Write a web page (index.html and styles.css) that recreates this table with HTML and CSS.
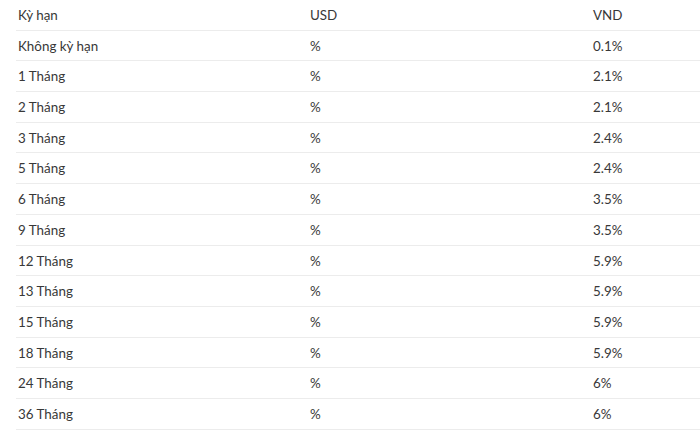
FILE: index.html
```
<!DOCTYPE html>
<html lang="vi">
<head>
    <meta charset="UTF-8">
    <meta name="viewport" content="width=device-width, initial-scale=1.0">
    <title>Lãi suất tiết kiệm</title>
    <link rel="stylesheet" href="styles.css">
</head>
<body>
    <table class="rate-table">
        <thead>
            <tr>
                <th class="col-term">Kỳ hạn</th>
                <th class="col-usd">USD</th>
                <th class="col-vnd">VND</th>
            </tr>
        </thead>
        <tbody>
            <tr><td>Không kỳ hạn</td><td>%</td><td>0.1%</td></tr>
            <tr><td>1 Tháng</td><td>%</td><td>2.1%</td></tr>
            <tr><td>2 Tháng</td><td>%</td><td>2.1%</td></tr>
            <tr><td>3 Tháng</td><td>%</td><td>2.4%</td></tr>
            <tr><td>5 Tháng</td><td>%</td><td>2.4%</td></tr>
            <tr><td>6 Tháng</td><td>%</td><td>3.5%</td></tr>
            <tr><td>9 Tháng</td><td>%</td><td>3.5%</td></tr>
            <tr><td>12 Tháng</td><td>%</td><td>5.9%</td></tr>
            <tr><td>13 Tháng</td><td>%</td><td>5.9%</td></tr>
            <tr><td>15 Tháng</td><td>%</td><td>5.9%</td></tr>
            <tr><td>18 Tháng</td><td>%</td><td>5.9%</td></tr>
            <tr><td>24 Tháng</td><td>%</td><td>6%</td></tr>
            <tr><td>36 Tháng</td><td>%</td><td>6%</td></tr>
        </tbody>
    </table>
</body>
</html>
```

FILE: styles.css
```
body {
    margin: 0;
    padding: 0 0 0 16px;
    background: #fff;
    font-family: Lato, "Noto Sans", sans-serif;
    color: #383838;
    overflow: hidden;
}
.rate-table {
    border-collapse: collapse;
    table-layout: fixed;
    width: 700px;
}
.col-term {
    width: 288px;
}
.col-usd {
    width: 279px;
}
.col-vnd {
    width: 133px;
}
.rate-table th,
.rate-table td {
    padding: 1px 2px 0;
    line-height: 28.69px;
    border-bottom: 1px solid #ececec;
    font-size: 13.4px;
    font-weight: normal;
    text-align: left;
    vertical-align: middle;
    white-space: nowrap;
}
```
